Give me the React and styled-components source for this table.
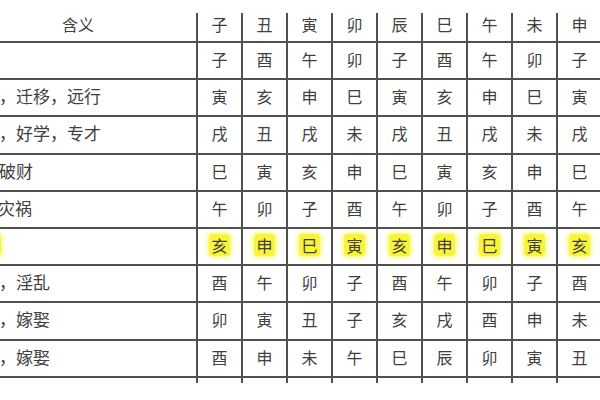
import styled, { createGlobalStyle } from 'styled-components';

const GlobalStyle = createGlobalStyle`
  body {
    margin: 0;
    background: #fff;
    overflow: hidden;
    font-family: "Noto Sans CJK SC", "Noto Sans", sans-serif;
  }
`;

const Table = styled.div`
  display: grid;
  grid-template-columns: 236px repeat(9, 43px);
  grid-template-rows: 28px repeat(9, 35.2px) 5px;
  gap: 2px;
  width: max-content;
  margin: 13px 0 0 -40px;
  background: #505050;
`;

const Cell = styled.div`
  background: #fff;
  display: flex;
  align-items: center;
  justify-content: ${(p) => (p.$left ? 'flex-start' : 'center')};
  padding: ${(p) => (p.$head ? '0 0 6px 0' : p.$left ? '0 0 3px 39px' : '0 0 3px 0')};
  font-size: ${(p) => (p.$left ? '17px' : '16px')};
  line-height: 20px;
  color: #404040;
  white-space: nowrap;
  overflow: ${(p) => (p.$left && !p.$head ? 'hidden' : 'visible')};
`;

const Mark = styled.span`
  display: inline-block;
  line-height: 18px;
  padding: 2px 2px;
  background: #f8f43a;
  border-radius: 4px;
  box-shadow: 0 0 4px 2px rgba(250, 246, 80, 0.7);
`;

const Stub = styled.div`
  background: #fff;
`;

const head = ['子', '丑', '寅', '卯', '辰', '巳', '午', '未', '申'];

const rows = [
  { text: '', cells: '子酉午卯子酉午卯子' },
  { text: '，迁移，远行', cells: '寅亥申巳寅亥申巳寅' },
  { text: '，好学，专才', cells: '戌丑戌未戌丑戌未戌' },
  { text: '破财', cells: '巳寅亥申巳寅亥申巳' },
  { text: '灾祸', cells: '午卯子酉午卯子酉午', shift: true },
  { text: '', cells: '亥申巳寅亥申巳寅亥', mark: true },
  { text: '，淫乱', cells: '酉午卯子酉午卯子酉' },
  { text: '，嫁娶', cells: '卯寅丑子亥戌酉申未' },
  { text: '，嫁娶', cells: '酉申未午巳辰卯寅丑' },
];

function App() {
  return (
    <>
      <GlobalStyle />
      <Table>
        <Cell $head>含义</Cell>
        {head.map((h, i) => (
          <Cell $head key={'h' + i}>{h}</Cell>
        ))}
        {rows.map((r, ri) => (
          <>
            <Cell $left key={'l' + ri} style={r.shift ? { paddingLeft: 38 } : undefined}>
              {r.mark ? <Mark style={{ marginLeft: -10 }}>&nbsp;&nbsp;</Mark> : r.text}
            </Cell>
            {[...r.cells].map((c, ci) => (
              <Cell key={ri + '-' + ci}>{r.mark ? <Mark>{c}</Mark> : c}</Cell>
            ))}
          </>
        ))}
        {Array.from({ length: 10 }).map((_, i) => (
          <Stub key={'s' + i} />
        ))}
      </Table>
    </>
  );
}

export default App;
